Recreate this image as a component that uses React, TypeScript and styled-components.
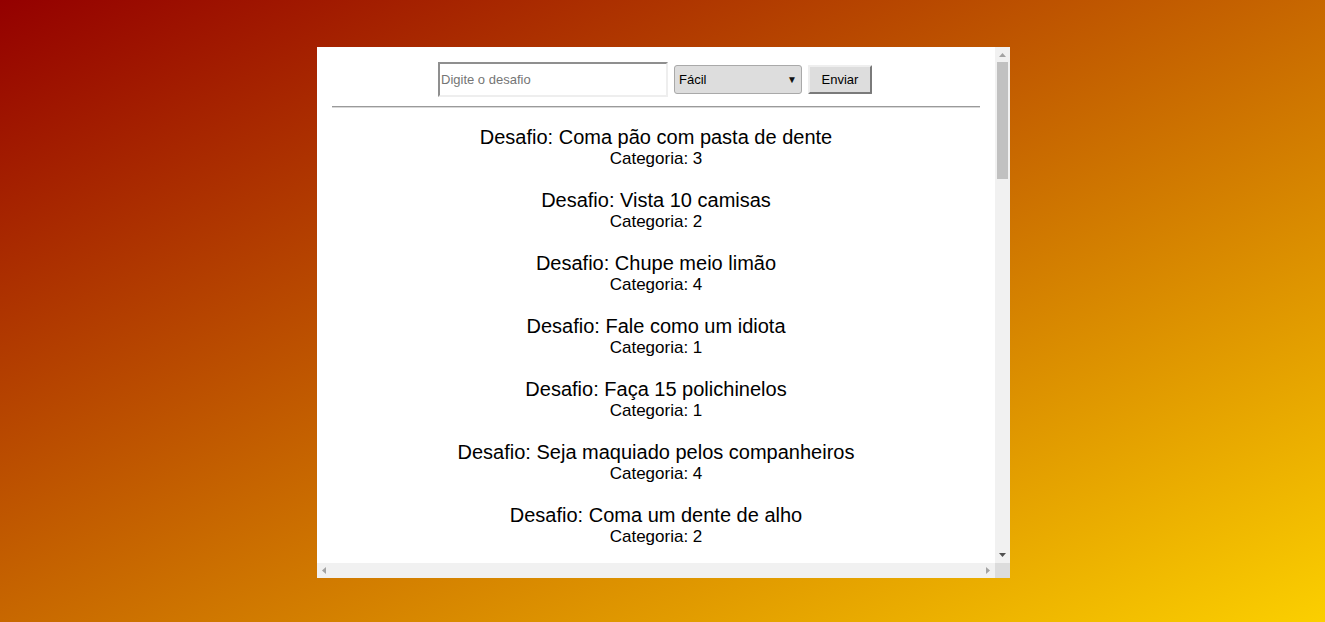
import React from 'react';
import styled, { createGlobalStyle } from 'styled-components';

type Desafio = {
  texto: string;
  categoria: number;
};

const desafios: Desafio[] = [
  { texto: 'Coma pão com pasta de dente', categoria: 3 },
  { texto: 'Vista 10 camisas', categoria: 2 },
  { texto: 'Chupe meio limão', categoria: 4 },
  { texto: 'Fale como um idiota', categoria: 1 },
  { texto: 'Faça 15 polichinelos', categoria: 1 },
  { texto: 'Seja maquiado pelos companheiros', categoria: 4 },
  { texto: 'Coma um dente de alho', categoria: 2 },
];

type ArrowDir = 'up' | 'down' | 'left' | 'right';

const arrowPoints: Record<ArrowDir, string> = {
  up: '4,10 11,10 7.5,6',
  down: '4,5 11,5 7.5,9',
  left: '9,4 9,11 5,7.5',
  right: '6,4 6,11 10,7.5',
};

const ScrollArrow = ({ dir, color }: { dir: ArrowDir; color: string }) => (
  <ArrowButton>
    <svg width="15" height="15" viewBox="0 0 15 15">
      <polygon points={arrowPoints[dir]} fill={color} />
    </svg>
  </ArrowButton>
);

const App = () => {
  return (
    <>
      <GlobalStyle />
      <Page>
        <Panel>
          <Content>
            <Form onSubmit={(e) => e.preventDefault()}>
              <Input placeholder="Digite o desafio" />
              <SelectBox>
                <span>Fácil</span>
                <Caret>▼</Caret>
              </SelectBox>
              <Button type="submit">Enviar</Button>
            </Form>
            <Divider />
            <List>
              {desafios.map((d) => (
                <Item key={d.texto}>
                  <Title>Desafio: {d.texto}</Title>
                  <Category>Categoria: {d.categoria}</Category>
                </Item>
              ))}
            </List>
          </Content>
          <VBar>
            <ScrollArrow dir="up" color="#a3a3a3" />
            <VTrack>
              <VThumb />
            </VTrack>
            <ScrollArrow dir="down" color="#505050" />
          </VBar>
          <HBar>
            <ScrollArrow dir="left" color="#a3a3a3" />
            <HTrack />
            <ScrollArrow dir="right" color="#a3a3a3" />
          </HBar>
          <Corner />
        </Panel>
      </Page>
    </>
  );
};

export default App;

const GlobalStyle = createGlobalStyle`
  html, body {
    margin: 0;
    padding: 0;
  }
  body {
    font-family: "Liberation Sans", Arial, sans-serif;
  }
`;

const Page = styled.div`
  width: 1325px;
  height: 622px;
  background: linear-gradient(to bottom right, #940000, #fbcf00);
  display: flex;
  justify-content: center;
  padding: 47px 0 0 2px;
  box-sizing: border-box;
`;

const Panel = styled.div`
  width: 693px;
  height: 531px;
  background: #fff;
  display: grid;
  grid-template-columns: 678px 15px;
  grid-template-rows: 516px 15px;
`;

const Content = styled.div`
  overflow: hidden;
  padding: 15px 15px 0;
`;

const VBar = styled.div`
  background: #f1f1f1;
  display: flex;
  flex-direction: column;
`;

const HBar = styled.div`
  background: #f1f1f1;
  display: flex;
`;

const Corner = styled.div`
  background: #dcdcdc;
`;

const ArrowButton = styled.div`
  width: 15px;
  height: 15px;
  flex: none;
  svg {
    display: block;
  }
`;

const VTrack = styled.div`
  flex: 1;
`;

const VThumb = styled.div`
  height: 117px;
  margin: 0 2px;
  background: #c1c1c1;
`;

const HTrack = styled.div`
  flex: 1;
`;

const Form = styled.form`
  display: flex;
  justify-content: center;
  align-items: center;
  gap: 6px;
  padding-right: 2px;
`;

const Input = styled.input`
  width: 230px;
  height: 35px;
  box-sizing: border-box;
  border: 2px solid #eeeeee;
  border-top-color: #8f8f8f;
  border-left-color: #8f8f8f;
  padding: 0 1px;
  font-family: "Liberation Sans", Arial, sans-serif;
  font-size: 13px;
  outline: none;
  &::placeholder {
    color: #757575;
  }
`;

const SelectBox = styled.div`
  width: 128px;
  height: 29px;
  box-sizing: border-box;
  border: 1px solid #a9a9a9;
  border-radius: 3px;
  background: #dddddd;
  display: flex;
  align-items: center;
  justify-content: space-between;
  padding: 0 4px;
  font-size: 13px;
  color: #000;
`;

const Caret = styled.span`
  font-size: 10px;
  color: #111;
`;

const Button = styled.button`
  width: 64px;
  height: 29px;
  box-sizing: border-box;
  background: #dddddd;
  border: 2px solid #eeeeee;
  border-right-color: #7a7a7a;
  border-bottom-color: #7a7a7a;
  border-radius: 1px;
  font-family: "Liberation Sans", Arial, sans-serif;
  font-size: 13px;
  color: #000;
  padding: 0;
`;

const Divider = styled.hr`
  margin: 9px 0 0;
  border: none;
  border-top: 1px solid #9a9a9a;
  border-bottom: 1px solid #d8d8d8;
`;

const List = styled.div`
  display: flex;
  flex-direction: column;
  align-items: center;
  padding: 8px 0 20px;
`;

const Item = styled.div`
  display: flex;
  flex-direction: column;
  align-items: center;
  color: #000;
  margin: 10px 0;
`;

const Title = styled.div`
  font-size: 20px;
  line-height: 23px;
`;

const Category = styled.div`
  font-size: 17px;
  line-height: 20px;
`;
